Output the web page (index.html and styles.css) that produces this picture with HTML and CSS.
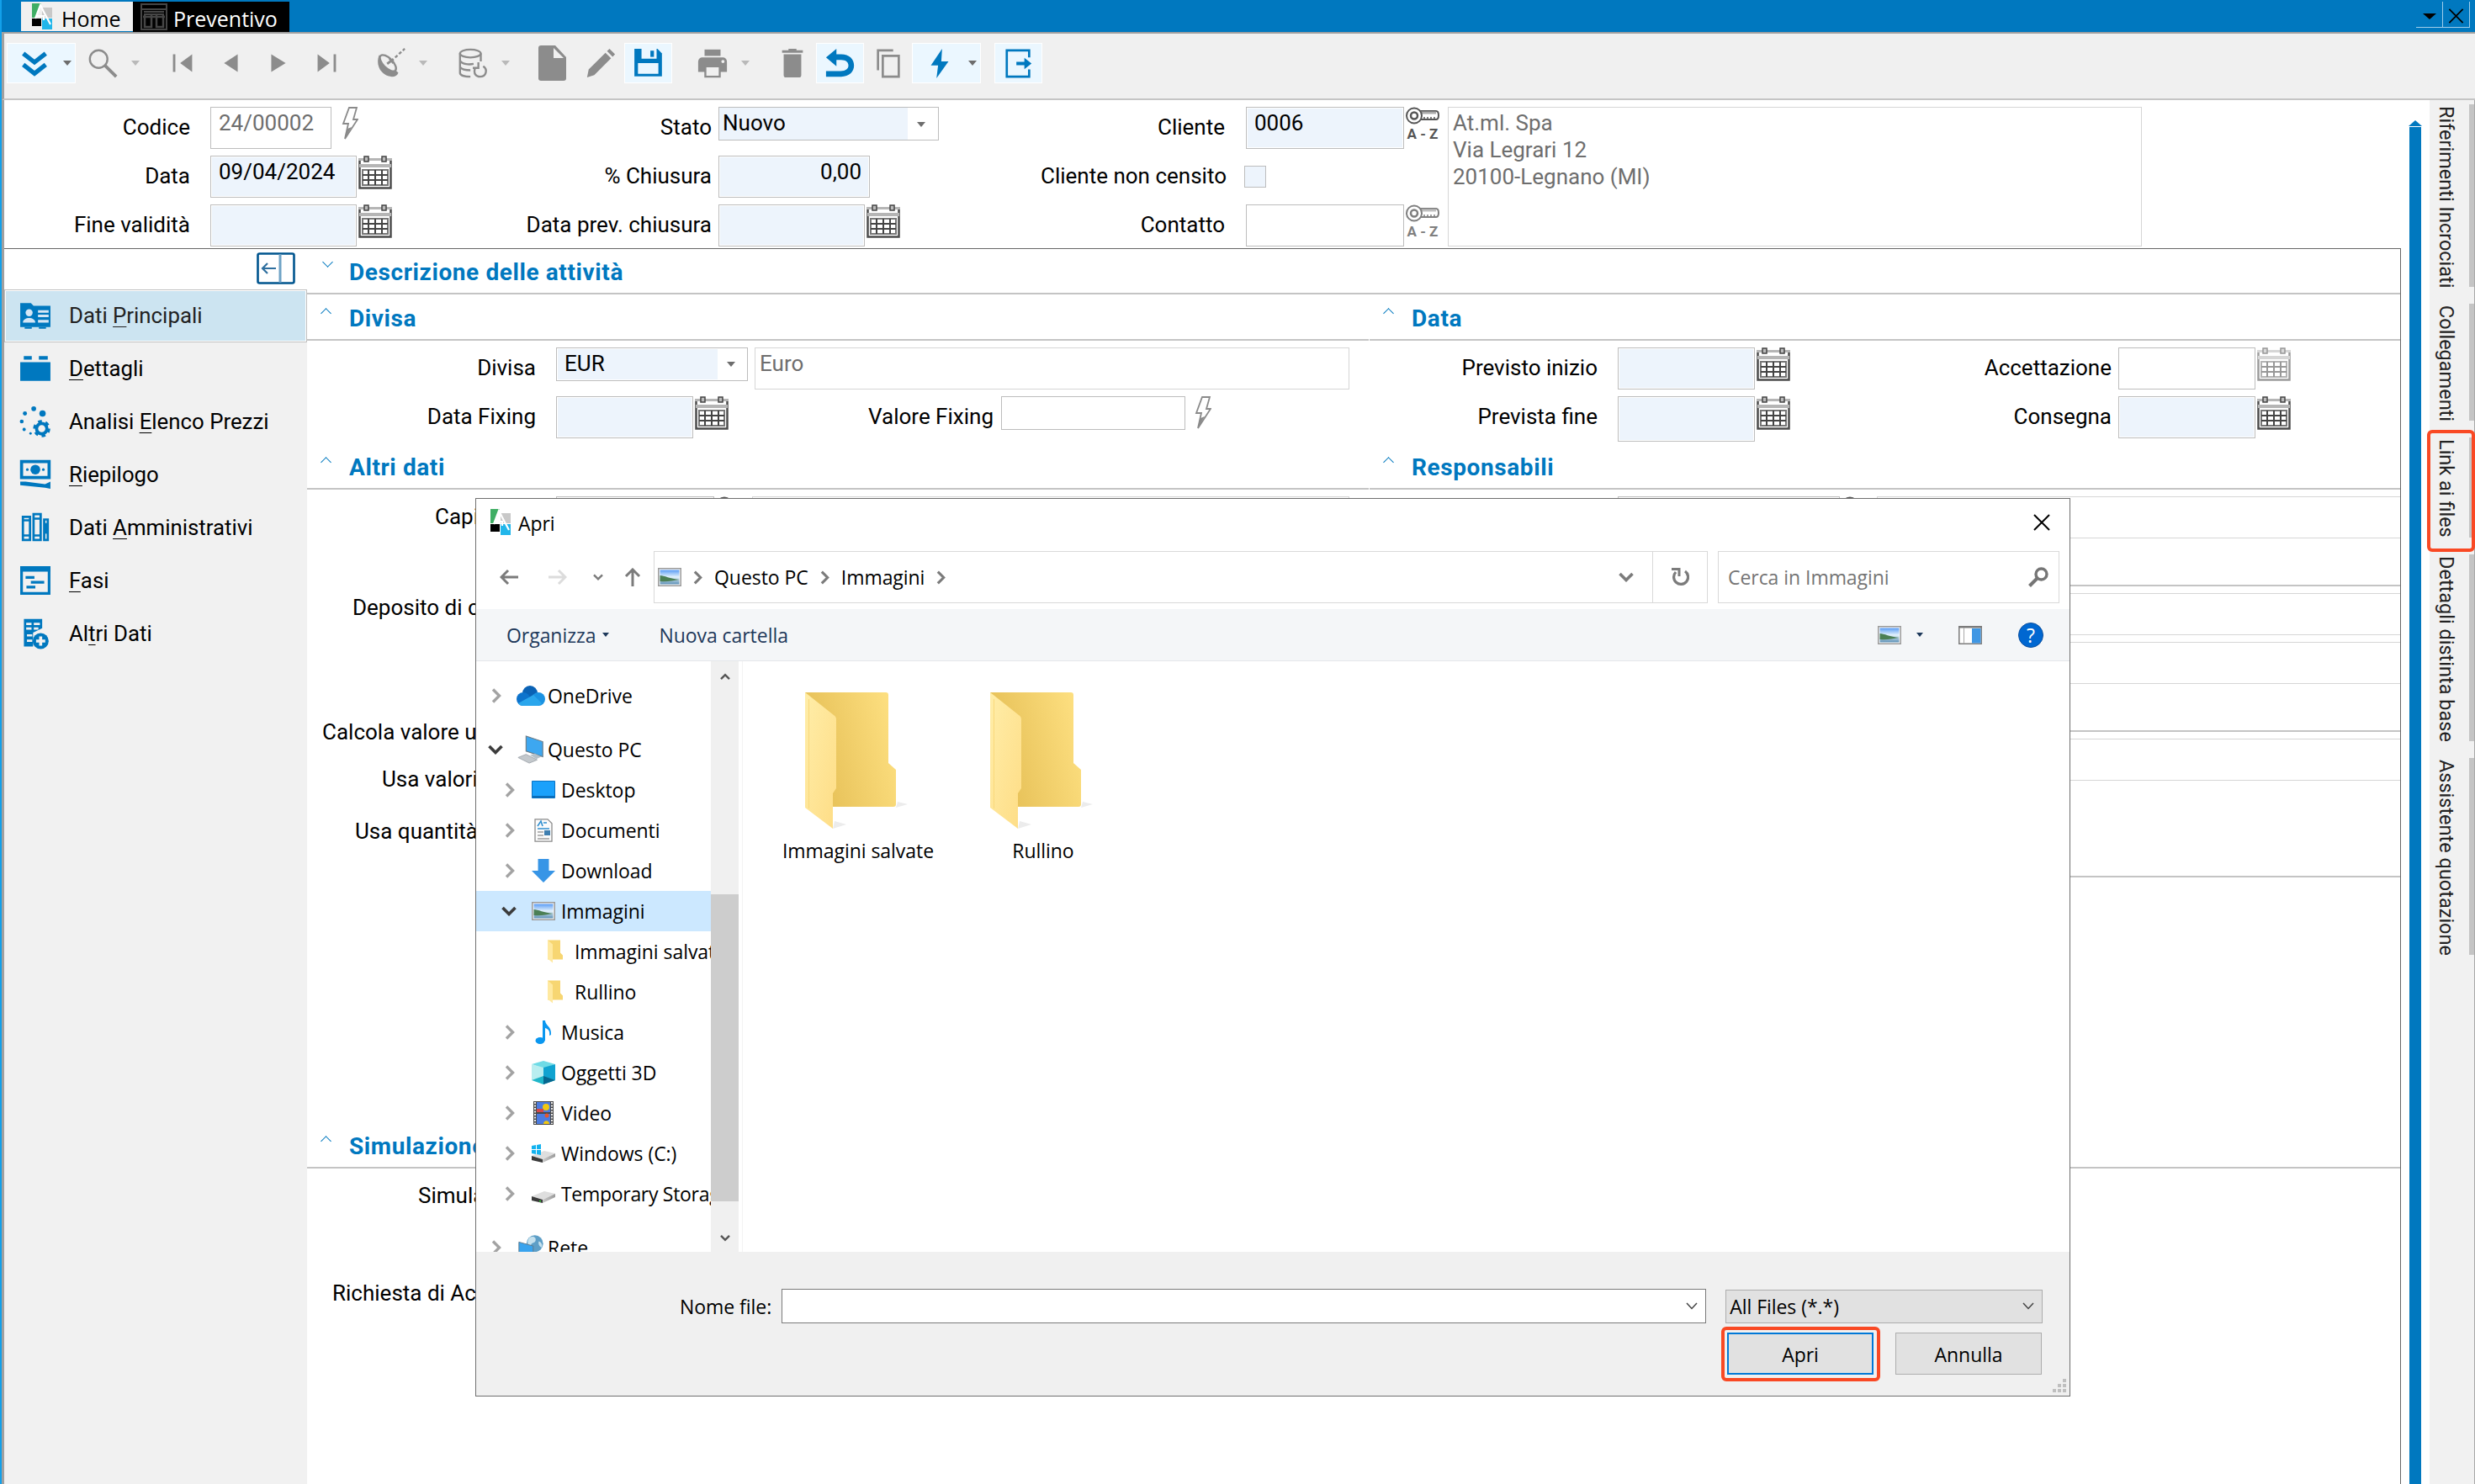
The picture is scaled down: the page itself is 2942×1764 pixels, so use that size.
FILE: index.html
```
<!DOCTYPE html>
<html lang="it">

<head>
  <meta charset="UTF-8">
  <meta name="viewport" content="width=device-width, initial-scale=1.0">
  <title>Preventivo</title>
  <link rel="stylesheet" href="styles.css">
</head>

<body>
  <!-- Icon sprite -->
  <svg class="sprite" width="0" height="0">
    <defs>
      <linearGradient id="folderBack" x1="0" y1="0.6" x2="1" y2="0.3">
        <stop offset="0.2" stop-color="#e9c45c" />
        <stop offset="1" stop-color="#fddf80" />
      </linearGradient>
      <linearGradient id="folderFront" x1="0" y1="0" x2="1" y2="1">
        <stop offset="0" stop-color="#ffeda8" />
        <stop offset="1" stop-color="#fedd86" />
      </linearGradient>
      <linearGradient id="sky" x1="0" y1="0" x2="0" y2="1">
        <stop offset="0" stop-color="#5a9cf5" />
        <stop offset="0.5" stop-color="#e4f2fc" />
        <stop offset="1" stop-color="#5b8fb5" />
      </linearGradient>
      <linearGradient id="drive" x1="0" y1="0" x2="1" y2="0">
        <stop offset="0" stop-color="#c9c9c9" />
        <stop offset="1" stop-color="#9b9b9b" />
      </linearGradient>
    </defs>
    <symbol id="i-logo" viewBox="0 0 24 31">
      <path d="M0 0h11L5 17H0z" fill="#3fae64" />
      <path d="M12 5h12v12H12z" fill="#c8c8c8" />
      <path d="M0 18h11v9H0z" fill="#000" />
      <path d="M12 18h12v13H12z" fill="#22b6ea" />
      <path d="M4 18 10 2l4 8 8 15M5 15h9v5" fill="none" stroke="#fff" stroke-width="2.2" />
    </symbol>
    <symbol id="i-form" viewBox="0 0 32 32">
      <path d="M1 1h30v30H1zM1 7h30M4 10h24M4 13h24" fill="none" stroke="#454545" stroke-width="2" />
      <path d="M5 14v14h8V14m6 0v14h8V14M3 16h26" fill="none" stroke="#454545" stroke-width="2.5" />
    </symbol>
    <symbol id="i-chevrons" viewBox="0 0 40 40">
      <path d="M6 8l14 11L34 8M6 22l14 11 14-11" fill="none" stroke="currentColor" stroke-width="5.5" />
    </symbol>
    <symbol id="i-search" viewBox="0 0 40 40">
      <circle cx="15" cy="15" r="11" fill="none" stroke="currentColor" stroke-width="2.5" />
      <path d="M23 23l14 14" stroke="currentColor" stroke-width="4" />
    </symbol>
    <symbol id="i-first" viewBox="0 0 40 40">
      <path d="M8 9h3v22H8zM32 9v22L17 20z" fill="currentColor" />
    </symbol>
    <symbol id="i-prev" viewBox="0 0 40 40">
      <path d="M29 9v22L12 20z" fill="currentColor" />
    </symbol>
    <symbol id="i-next" viewBox="0 0 40 40">
      <path d="M11 9v22l18-11z" fill="currentColor" />
    </symbol>
    <symbol id="i-last" viewBox="0 0 40 40">
      <path d="M32 9h-3v22h3zM9 9v22l15-11z" fill="currentColor" />
    </symbol>
    <symbol id="i-dish" viewBox="0 0 40 40">
      <path d="M6 10c-5 12 2 26 16 27 4 0 7-2 8-5z" fill="currentColor" />
      <ellipse cx="17" cy="20" rx="6" ry="13" transform="rotate(-45 17 20)" fill="#f0f0f0" stroke="currentColor" stroke-width="2.5" />
      <path d="M16 21l8-6M19 14l5 6" stroke="currentColor" stroke-width="3" />
      <path d="M26 13l12-11" stroke="currentColor" stroke-width="2.5" stroke-dasharray="4 2.5" />
    </symbol>
    <symbol id="i-database" viewBox="0 0 40 40">
      <g fill="none" stroke="currentColor" stroke-width="2.5">
        <ellipse cx="17" cy="8" rx="13" ry="5" />
        <path d="M4 8v24c0 3 5 5 13 5M30 8v10M4 17c3 5 12 5 17 4M4 25c3 4 9 4 13 4" />
        <path d="M23 26c-3 8 2 11 6 11 8 0 10-9 4-13M27 19v7h-7" />
      </g>
    </symbol>
    <symbol id="i-doc" viewBox="0 0 36 44">
      <path d="M4 1h17l13 14v25c0 2-1 3-3 3H4c-2 0-3-1-3-3V4c0-2 1-3 3-3z" fill="currentColor" />
      <path d="M19 4v12h12z" fill="#f0f0f0" />
    </symbol>
    <symbol id="i-pencil" viewBox="0 0 40 40">
      <path d="M3 38l2-10L26 7l7 7L12 35zM28 5l3-3 7 7-3 3z" fill="currentColor" />
    </symbol>
    <symbol id="i-save" viewBox="0 0 36 36">
      <path d="M2 2h26l5 5v26H2z" fill="currentColor" />
      <path d="M10 2h17v11H10zM6 18h23v12H6z" fill="#ebf7ff" />
      <path d="M20 4h4v7h-4z" fill="currentColor" />
    </symbol>
    <symbol id="i-print" viewBox="0 0 40 40">
      <path d="M10 3h20v8H10z" fill="currentColor" />
      <path d="M8 13h24c4 0 6 2 6 6v12H2V19c0-4 2-6 6-6z" fill="currentColor" />
      <path d="M11 24h18v13H11z" fill="#f0f0f0" stroke="currentColor" stroke-width="2.5" />
      <circle cx="33" cy="18" r="2" fill="#f0f0f0" />
    </symbol>
    <symbol id="i-trash" viewBox="0 0 40 40">
      <path d="M15 2h10v2h8v3H7V4h8zM9 9h22v26c0 2-1 3-3 3H12c-2 0-3-1-3-3z" fill="currentColor" />
    </symbol>
    <symbol id="i-undo" viewBox="0 0 40 40">
      <path d="M2 13L15 2v7h6c10 0 16 6 16 14s-6 14-16 14H2v-7h18c7 0 10-3 10-7s-3-7-9-7h-6v8z" fill="currentColor" />
    </symbol>
    <symbol id="i-copy" viewBox="0 0 40 40">
      <path d="M26 4H7v25M13 11h20v26H13z" fill="none" stroke="currentColor" stroke-width="2.8" />
    </symbol>
    <symbol id="i-bolt" viewBox="0 0 40 40">
      <path d="M23 2L9 23h9l-2 16 15-21h-9z" fill="currentColor" />
    </symbol>
    <symbol id="i-exit" viewBox="0 0 40 40">
      <path d="M33 13V4H5v33h28v-9" fill="none" stroke="currentColor" stroke-width="2.8" />
      <path d="M17 18.500h10v-5l9 7-9 7v-5H17z" fill="currentColor" />
    </symbol>
    <symbol id="i-flash" viewBox="0 0 20 40">
      <path d="M9 1h9l-4 14h5L4 38l4-18H2z" fill="#fff" stroke="#8a8a8a" stroke-width="1.800" />
      <path d="M4 38l3-12 5-2z" fill="#8a8a8a" />
    </symbol>
    <symbol id="i-calendar" viewBox="0 0 40 40">
      <path d="M1.500 3h37v35.500h-37z" fill="#fff" stroke="#4c4c4c" stroke-width="2.500" />
      <path d="M0 1h40v3H0z" fill="#fff" />
      <path d="M0 3h40v3H0zM1 10h38v4H1z" fill="#b5b5b5" />
      <path d="M5 17h30v18H5z" fill="#fff" stroke="#777" stroke-width="2" />
      <path d="M5 23h30M5 29h30M12 17v18M20 17v18M28 17v18" stroke="#444" stroke-width="2" />
      <path d="M7 1h5v6H7zM28 1h5v6h-5z" fill="#bbb" stroke="#444" stroke-width="1.500" />
    </symbol>
    <symbol id="i-key" viewBox="0 0 40 21">
      <path d="M17 5h19c4 0 4 10 0 10H17z" fill="#fff" stroke="currentColor" stroke-width="2" />
      <path d="M18 7h18" stroke="#aaa" stroke-width="3" />
      <path d="M22 15v-3m4 3v-3m4 3v-3m4 3v-3" stroke="currentColor" stroke-width="1.500" />
      <circle cx="10" cy="10.500" r="9" fill="#fff" stroke="currentColor" stroke-width="2" />
      <circle cx="10" cy="10.500" r="4" fill="#fff" stroke="currentColor" stroke-width="2.500" />
    </symbol>
    <symbol id="i-collapse" viewBox="0 0 46 38">
      <rect x="1.500" y="1.500" width="43" height="35" rx="2" fill="#fff" stroke="#00558f" stroke-width="2.600" />
      <path d="M28 2v34" stroke="#6fa3c6" stroke-width="3" />
      <path d="M7 19h16M13 13l-6 6 6 6" fill="none" stroke="#2f6f9f" stroke-width="2.200" />
    </symbol>
    <symbol id="i-card" viewBox="0 0 36 36">
      <path d="M1 4h12l3 3h19v24H1z" fill="currentColor" />
      <path d="M6 31h8v2H6zM22 31h8v2h-8z" fill="currentColor" />
      <circle cx="11" cy="15" r="4" fill="#d5e6f5" />
      <path d="M4 26c0-7 14-7 14 0zM21 12h12v3H21zM21 17h12v3H21zM21 23h12v3H21z" fill="#d5e6f5" />
    </symbol>
    <symbol id="i-box" viewBox="0 0 36 36">
      <path d="M5 4h9v4H5zM22 4h10v4H22zM1 11h34v21H1z" fill="currentColor" />
    </symbol>
    <symbol id="i-gear" viewBox="0 0 40 40">
      <g fill="currentColor">
        <circle cx="18" cy="4" r="3" />
        <circle cx="7" cy="10" r="2.600" />
        <circle cx="29" cy="10" r="4" />
        <circle cx="3" cy="20" r="2.400" />
        <circle cx="6" cy="30" r="2" />
        <circle cx="14" cy="35" r="1.500" />
      </g>
      <circle cx="28" cy="29" r="6.500" fill="none" stroke="currentColor" stroke-width="4" />
      <circle cx="28" cy="29" r="9" fill="none" stroke="currentColor" stroke-width="3.500" stroke-dasharray="4.700 4.700" />
    </symbol>
    <symbol id="i-money" viewBox="0 0 36 36">
      <path d="M2.500 3.500h31v18h-31z" fill="none" stroke="currentColor" stroke-width="3.500" />
      <circle cx="18" cy="12.500" r="5.500" fill="currentColor" />
      <circle cx="9" cy="12.500" r="1.500" fill="currentColor" />
      <circle cx="27" cy="12.500" r="1.500" fill="currentColor" />
      <path d="M1 26h6l22 3 6-3v8l-6-1-28-3z" fill="currentColor" />
    </symbol>
    <symbol id="i-books" viewBox="0 0 36 36">
      <path d="M4 6h8v26H4zM16 3h8v29h-8zM28 9h4v23h-4z" fill="none" stroke="currentColor" stroke-width="2.600" />
      <path d="M4 10h8M4 27h8M16 8h8M16 27h8" stroke="currentColor" stroke-width="2.400" />
      <path d="M28 13h5v12h-5z" fill="currentColor" />
    </symbol>
    <symbol id="i-window" viewBox="0 0 36 36">
      <path d="M2.500 3.500h31v29h-31z" fill="none" stroke="currentColor" stroke-width="3" />
      <path d="M1 2h34v6H1zM7 13h10v3H7zM13 18.500h15v3H13zM8 24h10v3H8z" fill="currentColor" />
    </symbol>
    <symbol id="i-tableplus" viewBox="0 0 36 42">
      <path d="M3 2h24v12l-12 6v18H3z" fill="currentColor" />
      <path d="M6 7h7v3H6zM16 7h8v3h-8zM6 13h7v3H6zM16 13h6v3h-6zM7 22h7v3H7zM7 29h7v3H7z" fill="#f1f1f1" />
      <circle cx="25" cy="31" r="10.500" fill="currentColor" />
      <path d="M25 25v12M19 31h12" stroke="#f1f1f1" stroke-width="4" />
    </symbol>
    <symbol id="i-picture" viewBox="0 0 28 22">
      <path d="M.8.8h26.400v20.400H.8z" fill="#fff" stroke="#9a9a9a" stroke-width="1.500" />
      <path d="M2.500 2.500h23v17h-23z" fill="url(#sky)" />
      <path d="M2.500 9c5 0 12 4 23 5-8 1-14 3-23 2z" fill="#4b7f55" />
    </symbol>
    <symbol id="i-cloud" viewBox="0 0 34 26">
      <circle cx="16" cy="10" r="9" fill="#0a62b5" />
      <circle cx="8" cy="17" r="8" fill="#0d73cc" />
      <circle cx="26" cy="17" r="8" fill="#1a92e2" />
      <path d="M2 22L20 12l10 10c-2 2-4 3-6 3H8c-3 0-5-1-6-3z" fill="#2aa6ec" />
    </symbol>
    <symbol id="i-pc" viewBox="0 0 34 36">
      <path d="M11 1l21 7v19L11 20z" fill="#3da7f0" stroke="#6a7a85" stroke-width="1.200" />
      <path d="M16 25l6-2 8 4-6 3z" fill="#b5c0c8" />
      <path d="M1 28l10-4 14 7-10 4z" fill="#c3c8cc" stroke="#a2a8ad" />
    </symbol>
    <symbol id="i-desktop" viewBox="0 0 28 22">
      <path d="M.5.5h27v20h-27z" fill="#1ba1fb" stroke="#0b74c4" />
      <path d="M1 18h26v2H1z" fill="#0b6db8" />
    </symbol>
    <symbol id="i-document" viewBox="0 0 22 28">
      <path d="M1 .8h15l5 5v21.400H1z" fill="#fbfbfb" stroke="#8b8b8b" stroke-width="1.300" />
      <path d="M4 9l4-6 2 6M11 5h4M4 12h14" fill="none" stroke="#2f8fd0" stroke-width="1.600" />
      <path d="M4 16h7M4 20h7M4 24h14" stroke="#a0a0a0" stroke-width="1.500" />
      <path d="M12 14h7v6h-7z" fill="#3f7fb0" />
    </symbol>
    <symbol id="i-download" viewBox="0 0 26 26">
      <path d="M7 0h12v13h7L13 26 0 13h7z" fill="#3795e6" />
    </symbol>
    <symbol id="i-minifolder" viewBox="0 0 20 27">
      <path d="M1 0h15v15l3 3v5H1z" fill="#f7d672" />
      <path d="M1 0l6 5v22l-6-5z" fill="#ffe9a0" />
    </symbol>
    <symbol id="i-music" viewBox="0 0 20 28">
      <ellipse cx="6" cy="24" rx="5.500" ry="4" fill="#0a97f0" />
      <path d="M9 0h3c0 6 8 7 7 17l-2 1c1-5-1-8-5-9v15H9z" fill="#0a97f0" />
    </symbol>
    <symbol id="i-cube" viewBox="0 0 28 28">
      <path d="M0 4l14-4 14 4-14 5z" fill="#6fdbe6" />
      <path d="M0 4l14 4v12L0 23z" fill="#b9eef0" />
      <path d="M28 4L14 8v12l14 3z" fill="#10a3d0" />
      <path d="M0 23l14-5 14 5-14 5z" fill="#1fb6c9" />
      <path d="M14 18l14 5-14 5z" fill="#05678f" />
    </symbol>
    <symbol id="i-video" viewBox="0 0 24 28">
      <path d="M0 0h24v28H0z" fill="#4a4a4a" />
      <path d="M4 1h16v12H4zM4 15h16v12H4z" fill="#4b7be0" />
      <path d="M2 1v26M22 1v26" stroke="#eee" stroke-width="2" stroke-dasharray="2 1.500" />
      <circle cx="15" cy="7" r="4" fill="#f2c811" />
      <path d="M4 9h8v4H4z" fill="#d4484a" />
      <circle cx="16" cy="17" r="2.500" fill="#e4572e" />
      <path d="M12 27c0-5 7-5 7 0z" fill="#f2c811" />
    </symbol>
    <symbol id="i-drive" viewBox="0 0 28 14">
      <path d="M0 6L15 0l13 3-15 7z" fill="#dedede" />
      <path d="M0 6l13 4v4L0 11z" fill="#3a3a3a" />
      <path d="M13 10l15-7v4l-15 7z" fill="url(#drive)" />
      <path d="M9 11h2v1.500H9z" fill="#3c3" />
    </symbol>
    <symbol id="i-windrive" viewBox="0 0 28 22">
      <path d="M0 14l15-6 13 3-15 7z" fill="#dedede" />
      <path d="M0 14l13 4v4L0 19z" fill="#3a3a3a" />
      <path d="M13 18l15-7v4l-15 7z" fill="url(#drive)" />
      <path d="M0 2l5-1v5H0zM6 1l5-1v6H6zM0 7h5v5l-5-1zM6 7h5v6l-5-1z" fill="#12b2ef" />
    </symbol>
    <symbol id="i-network" viewBox="-3 -1 36 36">
      <circle cx="20" cy="12" r="10.500" fill="#5e9fc7" />
      <path d="M14 4c4-2 8 0 7 4s-5 2-6 6-4 0-4-3 1-6 3-7zM25 9c3 1 5 4 4 8-3-1-5-4-4-8z" fill="#c5e1ee" />
      <path d="M0 10l18 5v15L0 25z" fill="#38a3ee" stroke="#5f7a8c" />
    </symbol>
    <symbol id="i-folder" viewBox="0 0 124 164">
      <path d="M33 162l16-5-14-4zM108 137l14-4-12-3z" fill="#ececec" />
      <path d="M0 0h96c2 0 3 1 3 3v81l9 8v41c0 2-1 3-3 3H28z" fill="url(#folderBack)" />
      <path d="M0 0l34 27c2 1 3 3 3 5v82l-4 6v42L0 137z" fill="url(#folderFront)" />
      <path d="M4.500 8v130" stroke="#f9d97c" />
    </symbol>
    <symbol id="i-chev" viewBox="0 0 12 18">
      <path d="M2 1.500L9.500 9 2 16.500" fill="none" stroke="currentColor" stroke-width="3.400" />
    </symbol>
    <symbol id="i-chevdown" viewBox="0 0 18 12">
      <path d="M1.500 2L9 9.500 16.500 2" fill="none" stroke="currentColor" stroke-width="3.600" />
    </symbol>
    <symbol id="i-thindown" viewBox="0 0 14 9">
      <path d="M1 1l6 6.500L13 1" fill="none" stroke="currentColor" stroke-width="1.500" />
    </symbol>
    <symbol id="i-arrow" viewBox="0 0 22 20">
      <path d="M22 10H3M10 2l-8 8 8 8" fill="none" stroke="currentColor" stroke-width="3" />
    </symbol>
    <symbol id="i-refresh" viewBox="0 0 22 22">
      <path d="M6 5a8.500 8.500 0 1 0 11-1" fill="none" stroke="currentColor" stroke-width="3.200" />
      <path d="M1 1.500h9V10" fill="none" stroke="currentColor" stroke-width="3" />
    </symbol>
    <symbol id="i-lens" viewBox="0 0 24 24">
      <circle cx="15.500" cy="8.500" r="6.500" fill="none" stroke="currentColor" stroke-width="3.400" />
      <path d="M11 13L1.500 22.500" stroke="currentColor" stroke-width="4" />
    </symbol>
    <symbol id="i-pane" viewBox="0 0 28 22">
      <path d="M.8.8h26.400v20.400H.8z" fill="#fff" stroke="#7b7b7b" stroke-width="1.500" />
      <path d="M0 0h28v2.500H0z" fill="#7b7b7b" />
      <path d="M6.500 2v19" stroke="#aaa" />
      <path d="M16 3h10.500v17.500H16z" fill="#3f97e4" />
    </symbol>
    <symbol id="i-close" viewBox="0 0 20 20">
      <path d="M1 1l18 18M19 1L1 19" stroke="currentColor" stroke-width="2" />
    </symbol>
  </svg>

  <div class="window">
    <header class="titlebar">
      <div class="tab">
        <svg class="tab-logo"><use href="#i-logo" /></svg>Home
      </div>
      <div class="tab tab-active">
        <svg class="tab-form"><use href="#i-form" /></svg>Preventivo
      </div>
      <div class="window-buttons">
        <span class="win-btn"><i class="win-menu"></i></span>
        <span class="win-btn"><svg class="win-close"><use href="#i-close" /></svg></span>
      </div>
    </header>

    <nav class="toolbar">
      <div class="tool drop on"><svg><use href="#i-chevrons" /></svg><i class="tri"></i></div>
      <div class="tool drop"><svg><use href="#i-search" /></svg><i class="tri"></i></div>
      <div class="tool gap"><svg><use href="#i-first" /></svg></div>
      <div class="tool"><svg><use href="#i-prev" /></svg></div>
      <div class="tool"><svg><use href="#i-next" /></svg></div>
      <div class="tool"><svg><use href="#i-last" /></svg></div>
      <div class="tool drop gap"><svg><use href="#i-dish" /></svg><i class="tri"></i></div>
      <div class="tool drop gap"><svg><use href="#i-database" /></svg><i class="tri"></i></div>
      <div class="tool gap"><svg class="tall"><use href="#i-doc" /></svg></div>
      <div class="tool"><svg><use href="#i-pencil" /></svg></div>
      <div class="tool on"><svg><use href="#i-save" /></svg></div>
      <div class="tool drop gap"><svg><use href="#i-print" /></svg><i class="tri"></i></div>
      <div class="tool gap"><svg><use href="#i-trash" /></svg></div>
      <div class="tool on"><svg><use href="#i-undo" /></svg></div>
      <div class="tool"><svg><use href="#i-copy" /></svg></div>
      <div class="tool drop on"><svg><use href="#i-bolt" /></svg><i class="tri"></i></div>
      <div class="tool gap on"><svg><use href="#i-exit" /></svg></div>
    </nav>

    <div class="workspace">
      <main class="main">
        <section class="head-form">
          <div class="group group-a">
            <div class="row"><label>Codice</label><div class="field code">24/00002</div><svg class="flash"><use href="#i-flash" /></svg></div>
            <div class="row"><label>Data</label><div class="field blue date">09/04/2024</div><svg class="cal"><use href="#i-calendar" /></svg></div>
            <div class="row"><label>Fine validità</label><div class="field blue date"></div><svg class="cal"><use href="#i-calendar" /></svg></div>
          </div>
          <div class="group group-b">
            <div class="row"><label>Stato</label><div class="select state"><span>Nuovo</span><i class="tri"></i></div></div>
            <div class="row"><label>% Chiusura</label><div class="field blue percent">0,00</div></div>
            <div class="row"><label>Data prev. chiusura</label><div class="field blue date"></div><svg class="cal"><use href="#i-calendar" /></svg></div>
          </div>
          <div class="group group-c">
            <div class="row"><label>Cliente</label><div class="field blue client">0006</div><div class="key"><svg><use href="#i-key" /></svg>A - Z</div></div>
            <div class="row unlisted"><label>Cliente non censito</label><div class="checkbox"></div></div>
            <div class="row"><label>Contatto</label><div class="field client"></div><div class="key key-off"><svg><use href="#i-key" /></svg>A - Z</div></div>
          </div>
          <div class="address">At.ml. Spa<br>Via Legrari 12<br>20100-Legnano (MI)</div>
        </section>

        <div class="body">
          <aside class="sidebar">
            <div class="sidebar-head"><svg><use href="#i-collapse" /></svg></div>
            <a class="nav-item selected"><svg><use href="#i-card" /></svg><span>Dati <u>P</u>rincipali</span></a>
            <a class="nav-item"><svg><use href="#i-box" /></svg><span><u>D</u>ettagli</span></a>
            <a class="nav-item"><svg><use href="#i-gear" /></svg><span>Analisi <u>E</u>lenco Prezzi</span></a>
            <a class="nav-item"><svg><use href="#i-money" /></svg><span><u>R</u>iepilogo</span></a>
            <a class="nav-item"><svg><use href="#i-books" /></svg><span>Dati <u>A</u>mministrativi</span></a>
            <a class="nav-item"><svg><use href="#i-window" /></svg><span><u>F</u>asi</span></a>
            <a class="nav-item"><svg><use href="#i-tableplus" /></svg><span>Al<u>t</u>ri Dati</span></a>
          </aside>

          <div class="content">
            <h2 class="section first"><i class="fold down"></i>Descrizione delle attività</h2>
            <div class="columns">
              <div class="col-left">
                <h2 class="section"><i class="fold"></i>Divisa</h2>
                <div class="fields">
                  <div class="row"><label>Divisa</label><div class="select currency"><span>EUR</span><i class="tri"></i></div><div class="field light currency-name">Euro</div></div>
                  <div class="row"><label>Data Fixing</label><div class="field blue fixing"></div><svg class="cal"><use href="#i-calendar" /></svg><label class="second">Valore Fixing</label><div class="field fixing-value"></div><svg class="flash"><use href="#i-flash" /></svg></div>
                </div>
                <h2 class="section"><i class="fold"></i>Altri dati</h2>
                <div class="other">
                  <div class="row leader"><span class="cut cut-1">Capi</span><div class="field leader-code"></div><div class="key"><svg><use href="#i-key" /></svg></div><div class="field light leader-name"></div></div>
                  <div class="cut cut-2">Deposito di c</div>
                  <div class="cut cut-3">Calcola valore u</div>
                  <div class="cut cut-4">Usa valori</div>
                  <div class="cut cut-5">Usa quantità</div>
                </div>
              </div>
              <div class="col-right">
                <h2 class="section"><i class="fold"></i>Data</h2>
                <div class="fields">
                  <div class="row"><label>Previsto inizio</label><div class="field blue due"></div><svg class="cal"><use href="#i-calendar" /></svg><label class="second">Accettazione</label><div class="field due"></div><svg class="cal off"><use href="#i-calendar" /></svg></div>
                  <div class="row"><label>Prevista fine</label><div class="field blue due due-tall"></div><svg class="cal"><use href="#i-calendar" /></svg><label class="second">Consegna</label><div class="field blue due"></div><svg class="cal"><use href="#i-calendar" /></svg></div>
                </div>
                <h2 class="section"><i class="fold"></i>Responsabili</h2>
                <div class="row owner"><div class="field owner-code"></div><div class="key"><svg><use href="#i-key" /></svg></div><div class="field light owner-name"></div></div>
                <div class="rule"></div>
                <div class="strip"></div>
                <div class="strip"></div>
                <div class="rule"></div>
                <div class="strip"></div>
                <div class="rule rule-far"></div>
              </div>
            </div>
            <h2 class="section simulation"><i class="fold"></i>Simulazione</h2>
            <div class="cut cut-6">Simula</div>
            <div class="cut cut-7">Richiesta di Ac</div>
          </div>
        </div>
      </main>

      <div class="gutter"><i class="gutter-arrow"></i><i class="gutter-bar"></i></div>

      <aside class="side-tabs">
        <div class="side-tab refs">Riferimenti Incrociati</div>
        <div class="side-tab links">Collegamenti</div>
        <div class="side-tab files">Link ai files</div>
        <div class="side-tab bom">Dettagli distinta base</div>
        <div class="side-tab quote">Assistente quotazione</div>
      </aside>
    </div>
  </div>

  <div class="highlight highlight-files"></div>

  <!-- File open dialog -->
  <div class="dialog">
    <div class="dialog-title"><svg class="dialog-logo"><use href="#i-logo" /></svg>Apri<svg class="dialog-close"><use href="#i-close" /></svg></div>

    <div class="dialog-nav">
      <svg class="back"><use href="#i-arrow" /></svg>
      <svg class="forward"><use href="#i-arrow" /></svg>
      <svg class="recent"><use href="#i-chevdown" /></svg>
      <svg class="up"><use href="#i-arrow" /></svg>
      <div class="path">
        <svg class="path-pic"><use href="#i-picture" /></svg>
        <svg class="chev"><use href="#i-chev" /></svg>
        <span>Questo PC</span>
        <svg class="chev"><use href="#i-chev" /></svg>
        <span>Immagini</span>
        <svg class="chev"><use href="#i-chev" /></svg>
        <svg class="path-down"><use href="#i-chevdown" /></svg>
      </div>
      <div class="refresh"><svg><use href="#i-refresh" /></svg></div>
      <div class="search">Cerca in Immagini<svg><use href="#i-lens" /></svg></div>
    </div>

    <div class="dialog-tools">
      <span>Organizza</span><i class="tri small"></i>
      <span class="new-folder">Nuova cartella</span>
      <div class="view-tools">
        <svg class="view-pic"><use href="#i-picture" /></svg>
        <i class="tri small"></i>
        <svg class="view-pane"><use href="#i-pane" /></svg>
        <span class="help">?</span>
      </div>
    </div>

    <div class="dialog-body">
      <div class="tree">
        <div class="node l1"><svg class="chev"><use href="#i-chev" /></svg><svg class="ico"><use href="#i-cloud" /></svg>OneDrive</div>
        <div class="node l1 spaced"><svg class="open"><use href="#i-chevdown" /></svg><svg class="ico"><use href="#i-pc" /></svg>Questo PC</div>
        <div class="node l2"><svg class="chev"><use href="#i-chev" /></svg><svg class="ico"><use href="#i-desktop" /></svg>Desktop</div>
        <div class="node l2"><svg class="chev"><use href="#i-chev" /></svg><svg class="ico"><use href="#i-document" /></svg>Documenti</div>
        <div class="node l2"><svg class="chev"><use href="#i-chev" /></svg><svg class="ico"><use href="#i-download" /></svg>Download</div>
        <div class="node l2 current"><svg class="open"><use href="#i-chevdown" /></svg><svg class="ico"><use href="#i-picture" /></svg>Immagini</div>
        <div class="node l3"><svg class="ico"><use href="#i-minifolder" /></svg>Immagini salvate</div>
        <div class="node l3"><svg class="ico"><use href="#i-minifolder" /></svg>Rullino</div>
        <div class="node l2"><svg class="chev"><use href="#i-chev" /></svg><svg class="ico"><use href="#i-music" /></svg>Musica</div>
        <div class="node l2"><svg class="chev"><use href="#i-chev" /></svg><svg class="ico"><use href="#i-cube" /></svg>Oggetti 3D</div>
        <div class="node l2"><svg class="chev"><use href="#i-chev" /></svg><svg class="ico"><use href="#i-video" /></svg>Video</div>
        <div class="node l2"><svg class="chev"><use href="#i-chev" /></svg><svg class="ico"><use href="#i-windrive" /></svg>Windows (C:)</div>
        <div class="node l2 storage"><svg class="chev"><use href="#i-chev" /></svg><svg class="ico drive"><use href="#i-drive" /></svg>Temporary Storage</div>
        <div class="node l1 spaced"><svg class="chev"><use href="#i-chev" /></svg><svg class="ico"><use href="#i-network" /></svg>Rete</div>
      </div>
      <div class="scrollbar">
        <svg class="scroll-up"><use href="#i-chevdown" /></svg>
        <div class="thumb"></div>
        <svg><use href="#i-chevdown" /></svg>
      </div>
      <div class="files-pane">
        <div class="file"><svg><use href="#i-folder" /></svg>Immagini salvate</div>
        <div class="file"><svg><use href="#i-folder" /></svg>Rullino</div>
      </div>
    </div>

    <div class="dialog-foot">
      <div class="name-row">
        <span class="name-label">Nome file:</span>
        <div class="combo name-combo"><svg><use href="#i-thindown" /></svg></div>
        <div class="combo type-combo">All Files (*.*)<svg><use href="#i-thindown" /></svg></div>
      </div>
      <div class="actions">
        <button class="btn btn-default">Apri</button>
        <button class="btn">Annulla</button>
      </div>
    </div>
    <div class="highlight highlight-open"></div>
    <svg class="grip" viewBox="0 0 16 16"><path d="M12 0h4v4h-4zM6 6h4v4H6zM12 6h4v4h-4zM0 12h4v4H0zM6 12h4v4H6zM12 12h4v4h-4z" fill="#bfbfbf" /></svg>
  </div>
</body>

</html>
```
FILE: styles.css
```
* {
  box-sizing: border-box;
}

body {
  margin: 0;
  width: 2942px;
  height: 1764px;
  overflow: hidden;
  position: relative;
  background: #fff;
  font-family: Roboto, Arial, sans-serif;
  font-size: 26px;
  color: #000;
}

svg {
  display: block;
  flex: none;
}

.sprite {
  position: absolute;
}

.window {
  height: 1764px;
  display: flex;
  flex-direction: column;
  border-left: 2px solid #12a0ea;
}

/* Title bar */
.titlebar {
  height: 38px;
  display: flex;
  padding: 2px 0 0 23px;
  background: #0078bf;
  font-family: "Open Sans", sans-serif;
  font-size: 25px;
}

.tab {
  width: 133px;
  height: 35px;
  display: flex;
  align-items: center;
  padding: 4px 0 0 13px;
  background: #f0f0f0;
}

.tab-active {
  width: 186px;
  height: 36px;
  padding-left: 9px;
  background: #000;
  color: #fff;
}

.tab-logo {
  width: 24px;
  height: 31px;
  margin: -4px 11px 0 0;
}

.tab-form {
  width: 32px;
  height: 32px;
  margin: -4px 7px 0 0;
}

.window-buttons {
  display: flex;
  height: 31px;
  margin: 0 6px 0 auto;
}

.win-btn {
  width: 32px;
  display: flex;
  align-items: center;
  justify-content: center;
  padding-top: 4px;
  border-right: 1px solid #9fcdea;
  border-bottom: 1px solid #9fcdea;
}

.win-menu {
  border: 8px solid transparent;
  border-top: 7px solid #000;
  border-bottom: 0;
}

.win-close {
  width: 19px;
  height: 18px;
}

/* Toolbar */
.toolbar {
  height: 81px;
  display: flex;
  padding: 11px 0 0 3px;
  background: #f0f0f0;
  border-left: 3px solid #a0a0a0;
  border-top: 2px solid #a0a0a0;
  border-bottom: 2px solid #c5c5c5;
}

.tool {
  width: 57px;
  height: 48px;
  display: flex;
  align-items: center;
  justify-content: center;
  color: #8c8c8c;
}

.tool svg {
  width: 38px;
  height: 38px;
}

.tool svg.tall {
  width: 36px;
  height: 44px;
}

.tool.drop {
  width: 82px;
  justify-content: flex-start;
  padding-left: 13px;
  gap: 15px;
}

.tool.gap {
  margin-left: 16px;
}

.tool.on {
  color: #0078bf;
  background: #ebf7ff;
  border: 1px solid #fff;
}

.tri {
  width: 0;
  height: 0;
  flex: none;
  border: 5.500px solid transparent;
  border-top: 6px solid #b9b9b9;
  border-bottom: 0;
}

.on .tri,
.select .tri {
  border-top-color: #6d6d6d;
}

.tri.small {
  border-width: 5px 4.500px 0;
  border-top-color: #1e395b;
}

/* Main area */
.workspace {
  flex: 1;
  display: flex;
}

.main {
  width: 2852px;
  border-left: 3px solid #a0a0a0;
}

.head-form {
  height: 176px;
  display: flex;
  padding-top: 8px;
}

.group-a {
  width: 495px;
}

.group-b {
  width: 620px;
}

.group-c {
  width: 601px;
}

.row {
  height: 58px;
  display: flex;
  align-items: flex-start;
}

.row label {
  line-height: 48px;
  text-align: right;
  white-space: nowrap;
}

.group-a label {
  width: 221px;
  margin-right: 24px;
}

.group-b label {
  width: 346px;
  margin-right: 8px;
}

.group-c label {
  width: 336px;
  margin-right: 25px;
}

.group-c .unlisted label {
  width: 338px;
  margin-right: 23px;
}

.field {
  height: 50px;
  padding: 0 9px;
  line-height: 36px;
  border: 1px solid #bdbdbd;
  background: #fff;
}

.field.blue {
  background: #edf4fc;
  box-shadow: inset 0 0 0 1px #fff;
}

.field.light {
  border-color: #d6d6d6;
  color: #6e6e6e;
}

.code {
  width: 144px;
  color: #6e6e6e;
}

.date {
  width: 174px;
}

.percent {
  width: 180px;
  text-align: right;
}

.client {
  width: 188px;
}

.flash {
  width: 20px;
  height: 40px;
  margin-left: 12px;
}

.cal {
  width: 40px;
  height: 40px;
  margin-left: 2px;
}

.cal.off {
  opacity: 0.55;
}

.select {
  height: 40px;
  display: flex;
  border: 1px solid #bdbdbd;
  line-height: 36px;
}

.select span {
  background: #edf4fc;
  padding-left: 4px;
}

.select .tri {
  margin: 17px 0 0 11px;
}

.state {
  width: 262px;
}

.state span {
  width: 224px;
}

.checkbox {
  width: 26px;
  height: 26px;
  margin: 12px 0 0 -2px;
  border: 1px solid #bdbdbd;
  background: #edf4fc;
}

.key {
  width: 40px;
  margin-left: 2px;
  color: #555;
  font-size: 17px;
  font-weight: 700;
  line-height: 22px;
  text-align: center;
  white-space: nowrap;
}

.key svg {
  width: 40px;
  height: 21px;
}

.key-off {
  opacity: 0.75;
}

.address {
  width: 825px;
  height: 166px;
  padding: 2px 5px;
  border: 1px solid #d6d6d6;
  color: #6e6e6e;
  line-height: 32px;
}

.body {
  height: 1469px;
  display: flex;
  border-top: 1px solid #666;
  border-right: 1px solid #666;
}

/* Left navigation */
.sidebar {
  width: 360px;
  background: #f1f1f1;
}

.sidebar-head {
  height: 48px;
  padding: 4px 14px 0 0;
  display: flex;
  justify-content: flex-end;
  background: #fff;
}

.sidebar-head svg {
  width: 46px;
  height: 38px;
}

.nav-item {
  height: 63px;
  display: flex;
  align-items: center;
  padding: 0 0 2px 18px;
  font-size: 25.800px;
}

.nav-item svg {
  width: 38px;
  height: 38px;
  color: #0078bf;
  margin-right: 21px;
}

.nav-item u {
  text-decoration-thickness: 1px;
  text-underline-offset: 4px;
}

.selected {
  background: #cce4f1;
  border: 1px solid #c0c0c0;
  box-shadow: inset 0 0 0 1px #fff;
  padding-left: 17px;
  color: #222;
}

/* Form sections */
.content {
  flex: 1;
}

.columns {
  display: flex;
  gap: 1px;
  height: 984px;
}

.col-left {
  width: 1262px;
}

.col-right {
  flex: 1;
}

.section {
  height: 55px;
  margin: 0;
  display: flex;
  padding-left: 16px;
  line-height: 58px;
  font-size: 28px;
  letter-spacing: 0.6px;
  color: #0078bf;
  border-bottom: 2px solid #c4c4c4;
}

.section.first {
  height: 54px;
  line-height: 56px;
}

.fold {
  width: 9px;
  height: 9px;
  margin: 18px 23px 0 2px;
  border: solid #0078bf;
  border-width: 1.500px 0 0 1.500px;
  transform: rotate(45deg);
}

.fold.down {
  margin: 11px 21px 0 4px;
  transform: rotate(225deg);
}

.fields {
  height: 122px;
  padding-top: 8px;
}

.col-left label {
  width: 272px;
  margin-right: 24px;
}

.col-left .second {
  width: 315px;
  margin-right: 9px;
}

.currency {
  width: 228px;
  height: 40px;
  padding: 1px;
  line-height: 35px;
}

.currency span {
  width: 190px;
  padding-left: 8px;
}

.currency .tri {
  margin: 15px 0 0 11px;
}

.currency-name {
  width: 707px;
  margin-left: 8px;
  padding-left: 5px;
}

.fixing {
  width: 163px;
}

.fixing-value {
  width: 219px;
  height: 40px;
}

.fixing-value + .flash {
  margin-left: 11px;
}

.col-right label {
  width: 271px;
  margin-right: 24px;
}

.col-right .second {
  width: 382px;
  margin-right: 8px;
}

.due {
  width: 163px;
}

.due-tall {
  height: 54px;
}

.owner {
  height: 58px;
  padding: 8px 0 0 295px;
}

.leader-code {
  width: 188px;
}

.leader-name {
  width: 710px;
  margin-left: 3px;
}

.owner-code {
  width: 264px;
}

.owner-name {
  flex: 1;
  margin-left: 2px;
  border-right: 0;
}

.rule {
  height: 57px;
  border-bottom: 2px solid #c4c4c4;
}

.rule-far {
  height: 115px;
}

.strip {
  height: 50px;
  margin-top: 8px;
  border: solid #d6d6d6;
  border-width: 1px 0;
}

/* Labels that run under the dialog */
.other {
  padding-top: 8px;
}

.cut {
  height: 48px;
  line-height: 48px;
  white-space: nowrap;
}

.cut-1 {
  width: 296px;
  padding-left: 152px;
}

.cut-2 {
  margin: 50px 0 0 54px;
}

.cut-3 {
  margin: 100px 0 0 18px;
}

.cut-4 {
  margin: 8px 0 0 89px;
}

.cut-5 {
  margin: 14px 0 0 57px;
}

.cut-6 {
  margin: 8px 0 0 132px;
}

.cut-7 {
  margin: 68px 0 0 30px;
}

/* Splitter and side tabs */
.gutter {
  width: 34px;
  display: flex;
  flex-direction: column;
  align-items: center;
  padding-top: 24px;
  border-right: 1px solid #fff;
}

.gutter-arrow {
  border: 8px solid transparent;
  border-top: 0;
  border-bottom: 7px solid #0078bf;
}

.gutter-bar {
  width: 14px;
  flex: 1;
  margin-top: 1px;
  background: #0078bf;
}

.side-tabs {
  flex: 1;
  display: flex;
  flex-direction: column;
  gap: 20px;
  padding-top: 5px;
  background: #f1f1f1;
  border-right: 1px solid #a8a8a8;
}

.side-tab {
  writing-mode: vertical-rl;
  width: 53px;
  padding-top: 2px;
  padding-right: 9px;
  line-height: 36px;
  font-size: 23.500px;
  white-space: nowrap;
  color: #222;
  border-right: 6px solid #c4c4c4;
}

.refs {
  height: 217px;
}

.links {
  height: 139px;
}

.files {
  height: 119px;
}

.bom {
  height: 222px;
}

.quote {
  height: 234px;
}

.highlight {
  position: absolute;
  border: 4px solid #f94924;
  border-radius: 6px;
}

.highlight-files {
  left: 2885px;
  top: 511px;
  width: 57px;
  height: 145px;
}

/* Dialog */
.dialog {
  position: absolute;
  left: 565px;
  top: 592px;
  width: 1896px;
  height: 1068px;
  display: flex;
  flex-direction: column;
  border: 1px solid #6f6f6f;
  background: #fff;
  font-family: "Open Sans", sans-serif;
  font-size: 23px;
  letter-spacing: -0.05px;
}

.dialog-title {
  height: 58px;
  display: flex;
  align-items: center;
  padding: 0 23px 0 17px;
  margin-bottom: 4px;
}

.dialog-logo {
  width: 24px;
  height: 31px;
  margin: -4px 9px 0 0;
}

.dialog-close {
  width: 20px;
  height: 20px;
  margin: -2px 0 0 auto;
}

.dialog-nav {
  height: 62px;
  display: flex;
  align-items: center;
  padding: 0 12px 0 28px;
  margin-bottom: 7px;
  color: #7b7b7b;
}

.back,
.forward,
.up {
  width: 22px;
  height: 20px;
}

.forward {
  margin-left: 36px;
  color: #dcdcdc;
  transform: scaleX(-1);
}

.recent {
  width: 12px;
  height: 8px;
  margin-left: 31px;
}

.up {
  margin-left: 24px;
  transform: rotate(90deg);
}

.path {
  width: 1188px;
  height: 62px;
  display: flex;
  align-items: center;
  margin-left: 14px;
  padding: 0 22px 0 4px;
  border: 1px solid #d9d9d9;
  color: #7b7b7b;
}

.path span {
  margin: 0 14px;
  color: #000;
}

.path-pic {
  width: 28px;
  height: 22px;
  margin-right: 14px;
}

.chev {
  width: 11px;
  height: 17px;
}

.path-down {
  width: 18px;
  height: 12px;
  margin-left: auto;
}

.refresh {
  width: 65px;
  height: 62px;
  display: flex;
  align-items: center;
  justify-content: center;
  border: 1px solid #d9d9d9;
  border-left: 0;
}

.refresh svg {
  width: 22px;
  height: 22px;
}

.search {
  width: 406px;
  height: 62px;
  display: flex;
  align-items: center;
  justify-content: space-between;
  margin-left: auto;
  padding: 0 12px 0 11px;
  border: 1px solid #d9d9d9;
  color: #757575;
}

.search svg {
  width: 24px;
  height: 24px;
}

.dialog-tools {
  height: 62px;
  display: flex;
  align-items: center;
  padding: 0 31px 0 36px;
  background: #f4f6f8;
  border-bottom: 1px solid #e4e7ea;
  color: #1e395b;
}

.dialog-tools > .tri {
  margin-left: 8px;
}

.new-folder {
  margin-left: 59px;
}

.view-tools {
  display: flex;
  align-items: center;
  margin-left: auto;
}

.view-pic,
.view-pane {
  width: 28px;
  height: 22px;
}

.view-pic {
  margin-right: 18px;
}

.view-pane {
  margin: 0 43px 0 42px;
}

.help {
  width: 30px;
  height: 30px;
  border-radius: 50%;
  border: 1px solid #0b4f9e;
  background: #0067d1;
  color: #fff;
  line-height: 28px;
  text-align: center;
}

.dialog-body {
  height: 702px;
  display: flex;
}

.tree {
  width: 279px;
  padding-top: 17px;
  overflow: hidden;
}

.node {
  height: 48px;
  display: flex;
  align-items: center;
  white-space: nowrap;
}

.node .chev {
  width: 12px;
  height: 18px;
  color: #a3a3a3;
}

.node .open {
  width: 18px;
  height: 12px;
  margin: 0 -2px 0 -4px;
  color: #3c3c3c;
}

.node .ico {
  height: 28px;
}

.l1 {
  padding-left: 18px;
}

.l1 .ico {
  width: 34px;
  height: 34px;
  margin: 0 3px 0 18px;
}

.l2 {
  padding-left: 34px;
}

.l2 .ico {
  width: 28px;
  margin: 0 7px 0 20px;
}

.l3 {
  padding-left: 84px;
}

.l3 .ico {
  width: 20px;
  margin-right: 13px;
}

.l2 .ico.drive {
  height: 14px;
  margin-top: 8px;
}

.storage {
  letter-spacing: -0.3px;
}

.spaced {
  margin-top: 16px;
}

.current {
  background: #cce8ff;
}

.scrollbar {
  width: 33px;
  display: flex;
  flex-direction: column;
  align-items: center;
  background: #f0f0f0;
  color: #555;
}

.scrollbar svg {
  width: 12px;
  height: 9px;
  margin-top: 39px;
}

.scrollbar .scroll-up {
  margin-top: 14px;
  transform: scaleY(-1);
}

.thumb {
  width: 33px;
  height: 365px;
  margin-top: 254px;
  background: #cdcdcd;
}

.files-pane {
  flex: 1;
  display: flex;
  margin-left: 4px;
  padding: 37px 0 0 27px;
  border-left: 1px solid #f3f3f3;
}

.file {
  width: 220px;
  line-height: 34px;
  text-align: center;
}

.file svg {
  width: 124px;
  height: 164px;
  margin: 0 0 7px 47px;
}

.dialog-foot {
  flex: 1;
  padding: 44px 32px 0 242px;
  background: #f0f0f0;
}

.name-row {
  display: flex;
  align-items: center;
  height: 41px;
}

.name-label {
  width: 121px;
  white-space: nowrap;
}

.combo {
  display: flex;
  align-items: center;
  justify-content: space-between;
  padding: 0 9px 0 4px;
}

.combo svg {
  width: 14px;
  height: 9px;
  margin-left: auto;
  color: #444;
}

.name-combo {
  width: 1100px;
  height: 41px;
  background: #fff;
  border: 1px solid #7a7a7a;
}

.type-combo {
  width: 377px;
  height: 40px;
  margin-left: 23px;
  background: #e1e1e1;
  border: 1px solid #adadad;
}

.actions {
  display: flex;
  justify-content: flex-end;
  gap: 26px;
  margin: 11px 1px 0 0;
}

.btn {
  width: 174px;
  height: 50px;
  padding: 2px 0 0;
  border: 1px solid #adadad;
  background: #e1e1e1;
  font: inherit;
  letter-spacing: inherit;
}

.btn-default {
  border: 2px solid #0078d7;
}

.highlight-open {
  left: 1480px;
  top: 984px;
  width: 189px;
  height: 65px;
}

.grip {
  position: absolute;
  right: 4px;
  bottom: 4px;
  width: 16px;
  height: 16px;
}
```
